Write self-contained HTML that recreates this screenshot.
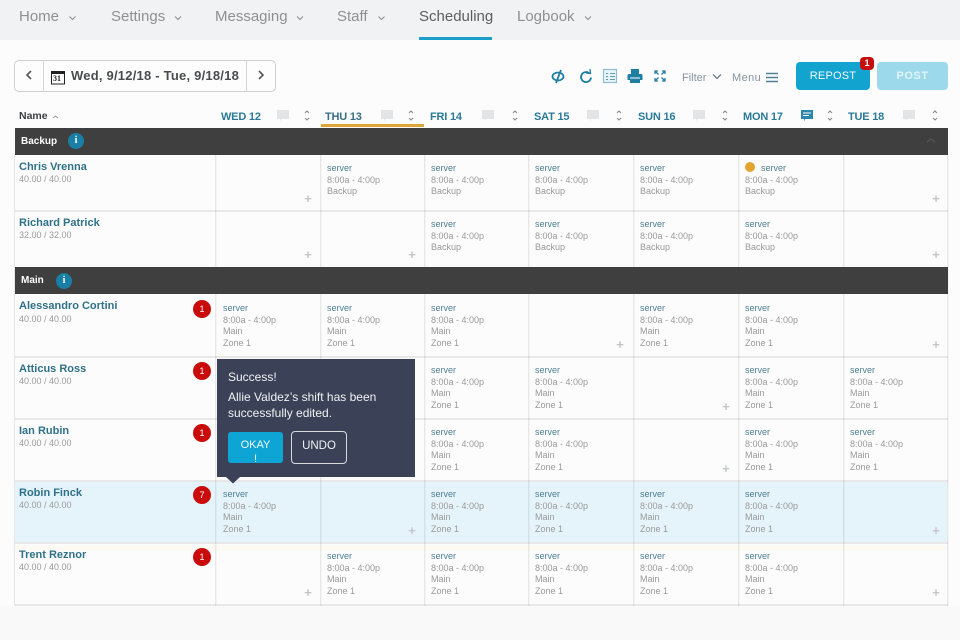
<!DOCTYPE html>
<html lang="en"><head><meta charset="utf-8"><title>Scheduling</title>
<style>
html,body{margin:0;padding:0}
body{width:960px;height:640px;position:relative;overflow:hidden;background:#fcfcfd;font-family:"Liberation Sans",sans-serif}
#p div,#p span,#p svg{position:absolute}
.t{white-space:nowrap;line-height:12px}
.nav{font-size:15px;color:#8f9091;top:8px;line-height:18px;white-space:nowrap}
.day{font-size:11px;font-weight:bold;color:#2a7a98;top:111px;line-height:12px;white-space:nowrap;letter-spacing:-.2px}
.h{background:#e8e8e9}
.v{background:linear-gradient(to right,rgba(0,0,0,.08) 50%,rgba(0,0,0,.03) 50%);width:2px}
.nm{font-size:11px;font-weight:bold;color:#2f7189;white-space:nowrap;line-height:12px;left:19px}
.hr{font-size:9px;color:#9b9b9b;white-space:nowrap;line-height:12px;left:19px}
.b{width:18px;height:18px;border-radius:50%;background:#c90b0b;color:#fff;font-size:9px;text-align:center;line-height:18px;left:193px}
.c{font-size:9px;color:#9a9a9a;white-space:nowrap;line-height:12px}
.c i{font-style:normal;position:absolute;left:0}
.c i.s{color:#4d7f8f}
.pl{font-size:13px;font-weight:bold;color:#c4c7c9;line-height:12px;width:12px;text-align:center}
.dk{left:15px;width:933px;height:27px;background:#3f3f3f}
.gt{color:#fff;font-size:10px;font-weight:bold;line-height:12px;left:21px}
.inf{width:16px;height:16px;border-radius:50%;background:#1a7fa5;color:#fff;font:bold 10px/16px "Liberation Serif",serif;text-align:center}
</style></head><body><div id="p">

<div style="left:0;top:0;width:960px;height:40px;background:#f1f2f3"></div>
<div class="nav" style="left:19px">Home</div>
<div class="nav" style="left:111px">Settings</div>
<div class="nav" style="left:215px">Messaging</div>
<div class="nav" style="left:337px">Staff</div>
<div class="nav" style="left:419px;color:#5b5e60">Scheduling</div>
<div class="nav" style="left:517px">Logbook</div>
<svg style="left:0;top:0" width="960" height="40" fill="none" stroke="#8f9091" stroke-width="1.100"><path d="M69.500 16.500l3 3 3-3M175 16.500l3 3 3-3M297 16.500l3 3 3-3M378.500 16.500l3 3 3-3M585 16.500l3 3 3-3"/></svg>
<div style="left:419px;top:37px;width:73px;height:3px;background:#1aa0c8"></div>

<div style="left:14px;top:60px;width:260px;height:30px;border:1px solid #cfd0d1;border-radius:5px;background:#fdfdfd"></div>
<div style="left:43px;top:61px;width:1px;height:30px;background:#d5d5d5"></div>
<div style="left:246px;top:61px;width:1px;height:30px;background:#d5d5d5"></div>
<svg style="left:0;top:55px" width="280" height="40" fill="none"><path d="M31 16l-4 4 4 4M259 16l4 4-4 4" stroke="#555" stroke-width="1.600"/><rect x="51.500" y="17" width="13" height="12" stroke="#222"/><rect x="51" y="16" width="14" height="3" fill="#222"/></svg>
<div class="t" style="left:53px;top:74px;font-size:8px;font-weight:bold;color:#222;font-family:'Liberation Serif',serif;line-height:10px">31</div>
<div class="t" style="left:71px;top:69px;font-size:13px;font-weight:bold;color:#4a4d50;letter-spacing:.22px;line-height:14px">Wed, 9/12/18 - Tue, 9/18/18</div>

<svg style="left:550px;top:66px" width="120" height="20" fill="none" stroke="#1e7fa3" stroke-width="1.800">
<ellipse cx="8" cy="10.500" rx="5.500" ry="4"/><path d="M11 4l-5 13"/>
<path d="M39.500 7.500a5 5 0 1 0 1.500 4"/><path d="M36 7l4.500.5L40 3" stroke-width="1.300"/>
<rect x="53.500" y="3.500" width="13" height="13" stroke="#8fbfd2" stroke-width="1.200" fill="#eaf4f8"/><path d="M56 7.500h2M60 7.500h5M56 10.500h2M60 10.500h5M56 13.500h2M60 13.500h5" stroke="#5d9fb8" stroke-width="1"/>
<path d="M81 3h8v6h-8z" fill="#1e7fa3" stroke="none"/><path d="M79 8h12a1.500 1.500 0 0 1 1.500 1.500V14h-15V9.500A1.500 1.500 0 0 1 79 8z" fill="#1e7fa3" stroke="none"/><path d="M80 14h10v3H80z" fill="#1e7fa3" stroke="none"/><path d="M80 12h10" stroke="#fff" stroke-width="1"/>
<path d="M105 5l3.500 3.500M115 5l-3.500 3.500M105 15l3.500-3.500M115 15l-3.500-3.500" stroke-width="1.300"/><path d="M105 8V5h3M112 5h3v3M105 12v3h3M112 15h3v-3" stroke-width="1.300"/>
</svg>
<div class="t" style="left:682px;top:72px;font-size:11px;color:#87949c">Filter</div>
<svg style="left:710px;top:70px" width="76" height="16" fill="none"><path d="M3 4.500l4 4 4-4" stroke="#6d7f89" stroke-width="1.300"/><path d="M56 3.500h12M56 7.500h12M56 11.500h12" stroke="#4f8094" stroke-width="1.500"/></svg>
<div class="t" style="left:732px;top:72px;font-size:11px;color:#87949c;letter-spacing:.4px">Menu</div>
<div style="left:796px;top:62px;width:74px;height:28px;background:#12a3cf;border-radius:4px;color:#f4fbfe;font-size:11px;line-height:28px;text-align:center;letter-spacing:.2px">REPOST</div>
<div style="left:860px;top:57px;width:14px;height:13px;background:#c70d0d;border-radius:4px;color:#fff;font-size:9px;font-weight:bold;line-height:13px;text-align:center">1</div>
<div style="left:877px;top:62px;width:71px;height:28px;background:#9bd9eb;border-radius:4px;color:#e3f5fa;font-size:11px;font-weight:bold;line-height:28px;text-align:center;letter-spacing:.5px">POST</div>

<div class="t" style="left:19px;top:110px;font-size:10.500px;font-weight:bold;color:#3a3d40">Name</div>
<svg style="left:50px;top:113px" width="10" height="8" fill="none"><path d="M3 5l2.500-2L8 5" stroke="#999"/></svg>
<div class="day" style="left:221px">WED 12</div>
<div class="day" style="left:325px;color:#3a6e82">THU 13</div>
<div class="day" style="left:430px">FRI 14</div>
<div class="day" style="left:534px">SAT 15</div>
<div class="day" style="left:638px">SUN 16</div>
<div class="day" style="left:743px">MON 17</div>
<div class="day" style="left:848px">TUE 18</div>
<div style="left:321px;top:124px;width:103px;height:3px;background:#e0a537"></div>
<svg style="left:0;top:105px" width="960" height="22" fill="#e3e4e5">
<path d="M277 5h12v9h-8l-1 2.500v-2.500h-3z"/>
<path d="M381 5h12v9h-8l-1 2.500v-2.500h-3zM482 5h12v9h-8l-1 2.500v-2.500h-3zM587 5h12v9h-8l-1 2.500v-2.500h-3zM693 5h12v9h-8l-1 2.500v-2.500h-3zM903 5h12v9h-8l-1 2.500v-2.500h-3z"/>
<path d="M801 5h12v9h-8l-1 2.500v-2.500h-3z" fill="#2a86aa"/><path d="M803 8h8M803 10.500h6" stroke="#fff"/>
<g fill="none" stroke="#7f8a90" stroke-width="1"><path d="M305 8l2-2 2 2M305 13l2 2 2-2M409 8l2-2 2 2M409 13l2 2 2-2M513 8l2-2 2 2M513 13l2 2 2-2M617 8l2-2 2 2M617 13l2 2 2-2M723 8l2-2 2 2M723 13l2 2 2-2M828 8l2-2 2 2M828 13l2 2 2-2M933 8l2-2 2 2M933 13l2 2 2-2"/></g>
</svg>

<div style="left:15px;top:481px;width:932px;height:62px;background:#e5f3fb"></div>
<div style="left:15px;top:545px;width:932px;height:6px;background:#fdf9f4"></div>
<div style="left:0;top:606px;width:960px;height:34px;background:#f9f9f9"></div>

<div class="h" style="left:15px;top:210px;width:933px;height:2px"></div>
<div class="h" style="left:15px;top:356px;width:933px;height:2px"></div>
<div class="h" style="left:15px;top:418px;width:933px;height:2px"></div>
<div class="h" style="left:15px;top:480px;width:933px;height:2px"></div>
<div class="h" style="left:15px;top:542px;width:933px;height:2px"></div>
<div class="h" style="left:15px;top:604px;width:933px;height:2px"></div>
<div class="v" style="left:14px;top:155px;height:451px;width:1px;background:#e6e6e7"></div>
<div class="v" style="left:947px;top:155px;height:451px"></div>
<div class="v" style="left:215px;top:155px;height:451px"></div>
<div class="v" style="left:320px;top:155px;height:451px"></div>
<div class="v" style="left:424px;top:155px;height:451px"></div>
<div class="v" style="left:528px;top:155px;height:451px"></div>
<div class="v" style="left:633px;top:155px;height:451px"></div>
<div class="v" style="left:738px;top:155px;height:451px"></div>
<div class="v" style="left:843px;top:155px;height:451px"></div>

<div class="dk" style="top:128px"></div>
<div class="dk" style="top:267px"></div>
<div class="gt" style="top:136px">Backup</div>
<div class="gt" style="top:275px">Main</div>
<div class="inf" style="left:68px;top:133px">i</div>
<div class="inf" style="left:56px;top:273px">i</div>
<svg style="left:925px;top:137px" width="12" height="8" fill="none"><path d="M2 5l4-3 4 3" stroke="#5c5c5c"/></svg>

<div class="nm" style="top:161px">Chris Vrenna</div><div class="hr" style="top:173px">40.00 / 40.00</div>
<div class="nm" style="top:217px">Richard Patrick</div><div class="hr" style="top:229px">32.00 / 32.00</div>
<div class="nm" style="top:300px">Alessandro Cortini</div><div class="hr" style="top:313px">40.00 / 40.00</div>
<div class="nm" style="top:363px">Atticus Ross</div><div class="hr" style="top:375px">40.00 / 40.00</div>
<div class="nm" style="top:425px">Ian Rubin</div><div class="hr" style="top:437px">40.00 / 40.00</div>
<div class="nm" style="top:487px">Robin Finck</div><div class="hr" style="top:499px">40.00 / 40.00</div>
<div class="nm" style="top:549px">Trent Reznor</div><div class="hr" style="top:561px">40.00 / 40.00</div>
<div class="b" style="top:300px">1</div>
<div class="b" style="top:362px">1</div>
<div class="b" style="top:424px">1</div>
<div class="b" style="top:486px">7</div>
<div class="b" style="top:548px">1</div>

<!-- Backup -->
<div class="c" style="left:327px;top:154px"><i class="s" style="top:8px">server</i><i style="top:20px">8:00a - 4:00p</i><i style="top:31px">Backup</i></div>
<div class="c" style="left:431px;top:154px"><i class="s" style="top:8px">server</i><i style="top:20px">8:00a - 4:00p</i><i style="top:31px">Backup</i></div>
<div class="c" style="left:535px;top:154px"><i class="s" style="top:8px">server</i><i style="top:20px">8:00a - 4:00p</i><i style="top:31px">Backup</i></div>
<div class="c" style="left:640px;top:154px"><i class="s" style="top:8px">server</i><i style="top:20px">8:00a - 4:00p</i><i style="top:31px">Backup</i></div>
<div class="c" style="left:745px;top:154px"><i class="s" style="top:8px;left:16px">server</i><i style="top:20px">8:00a - 4:00p</i><i style="top:31px">Backup</i></div>
<div style="left:745px;top:162px;width:10px;height:10px;border-radius:50%;background:#e5a42f"></div>
<div class="c" style="left:431px;top:210px"><i class="s" style="top:8px">server</i><i style="top:20px">8:00a - 4:00p</i><i style="top:31px">Backup</i></div>
<div class="c" style="left:535px;top:210px"><i class="s" style="top:8px">server</i><i style="top:20px">8:00a - 4:00p</i><i style="top:31px">Backup</i></div>
<div class="c" style="left:640px;top:210px"><i class="s" style="top:8px">server</i><i style="top:20px">8:00a - 4:00p</i><i style="top:31px">Backup</i></div>
<div class="c" style="left:745px;top:210px"><i class="s" style="top:8px">server</i><i style="top:20px">8:00a - 4:00p</i><i style="top:31px">Backup</i></div>

<!-- Alessandro -->
<div class="c" style="left:223px;top:294px"><i class="s" style="top:8px">server</i><i style="top:20px">8:00a - 4:00p</i><i style="top:31px">Main</i><i style="top:43px">Zone 1</i></div>
<div class="c" style="left:327px;top:294px"><i class="s" style="top:8px">server</i><i style="top:20px">8:00a - 4:00p</i><i style="top:31px">Main</i><i style="top:43px">Zone 1</i></div>
<div class="c" style="left:431px;top:294px"><i class="s" style="top:8px">server</i><i style="top:20px">8:00a - 4:00p</i><i style="top:31px">Main</i><i style="top:43px">Zone 1</i></div>
<div class="c" style="left:640px;top:294px"><i class="s" style="top:8px">server</i><i style="top:20px">8:00a - 4:00p</i><i style="top:31px">Main</i><i style="top:43px">Zone 1</i></div>
<div class="c" style="left:745px;top:294px"><i class="s" style="top:8px">server</i><i style="top:20px">8:00a - 4:00p</i><i style="top:31px">Main</i><i style="top:43px">Zone 1</i></div>
<!-- Atticus -->
<div class="c" style="left:431px;top:356px"><i class="s" style="top:8px">server</i><i style="top:20px">8:00a - 4:00p</i><i style="top:31px">Main</i><i style="top:43px">Zone 1</i></div>
<div class="c" style="left:535px;top:356px"><i class="s" style="top:8px">server</i><i style="top:20px">8:00a - 4:00p</i><i style="top:31px">Main</i><i style="top:43px">Zone 1</i></div>
<div class="c" style="left:745px;top:356px"><i class="s" style="top:8px">server</i><i style="top:20px">8:00a - 4:00p</i><i style="top:31px">Main</i><i style="top:43px">Zone 1</i></div>
<div class="c" style="left:850px;top:356px"><i class="s" style="top:8px">server</i><i style="top:20px">8:00a - 4:00p</i><i style="top:31px">Main</i><i style="top:43px">Zone 1</i></div>
<!-- Ian -->
<div class="c" style="left:431px;top:418px"><i class="s" style="top:8px">server</i><i style="top:20px">8:00a - 4:00p</i><i style="top:31px">Main</i><i style="top:43px">Zone 1</i></div>
<div class="c" style="left:535px;top:418px"><i class="s" style="top:8px">server</i><i style="top:20px">8:00a - 4:00p</i><i style="top:31px">Main</i><i style="top:43px">Zone 1</i></div>
<div class="c" style="left:745px;top:418px"><i class="s" style="top:8px">server</i><i style="top:20px">8:00a - 4:00p</i><i style="top:31px">Main</i><i style="top:43px">Zone 1</i></div>
<div class="c" style="left:850px;top:418px"><i class="s" style="top:8px">server</i><i style="top:20px">8:00a - 4:00p</i><i style="top:31px">Main</i><i style="top:43px">Zone 1</i></div>
<!-- Robin -->
<div class="c" style="left:223px;top:480px"><i class="s" style="top:8px">server</i><i style="top:20px">8:00a - 4:00p</i><i style="top:31px">Main</i><i style="top:43px">Zone 1</i></div>
<div class="c" style="left:431px;top:480px"><i class="s" style="top:8px">server</i><i style="top:20px">8:00a - 4:00p</i><i style="top:31px">Main</i><i style="top:43px">Zone 1</i></div>
<div class="c" style="left:535px;top:480px"><i class="s" style="top:8px">server</i><i style="top:20px">8:00a - 4:00p</i><i style="top:31px">Main</i><i style="top:43px">Zone 1</i></div>
<div class="c" style="left:640px;top:480px"><i class="s" style="top:8px">server</i><i style="top:20px">8:00a - 4:00p</i><i style="top:31px">Main</i><i style="top:43px">Zone 1</i></div>
<div class="c" style="left:745px;top:480px"><i class="s" style="top:8px">server</i><i style="top:20px">8:00a - 4:00p</i><i style="top:31px">Main</i><i style="top:43px">Zone 1</i></div>
<!-- Trent -->
<div class="c" style="left:327px;top:542px"><i class="s" style="top:8px">server</i><i style="top:20px">8:00a - 4:00p</i><i style="top:31px">Main</i><i style="top:43px">Zone 1</i></div>
<div class="c" style="left:431px;top:542px"><i class="s" style="top:8px">server</i><i style="top:20px">8:00a - 4:00p</i><i style="top:31px">Main</i><i style="top:43px">Zone 1</i></div>
<div class="c" style="left:535px;top:542px"><i class="s" style="top:8px">server</i><i style="top:20px">8:00a - 4:00p</i><i style="top:31px">Main</i><i style="top:43px">Zone 1</i></div>
<div class="c" style="left:640px;top:542px"><i class="s" style="top:8px">server</i><i style="top:20px">8:00a - 4:00p</i><i style="top:31px">Main</i><i style="top:43px">Zone 1</i></div>
<div class="c" style="left:745px;top:542px"><i class="s" style="top:8px">server</i><i style="top:20px">8:00a - 4:00p</i><i style="top:31px">Main</i><i style="top:43px">Zone 1</i></div>

<div class="pl" style="left:302px;top:193px">+</div>
<div class="pl" style="left:930px;top:193px">+</div>
<div class="pl" style="left:302px;top:249px">+</div>
<div class="pl" style="left:406px;top:249px">+</div>
<div class="pl" style="left:930px;top:249px">+</div>
<div class="pl" style="left:614px;top:339px">+</div>
<div class="pl" style="left:930px;top:339px">+</div>
<div class="pl" style="left:720px;top:401px">+</div>
<div class="pl" style="left:720px;top:463px">+</div>
<div class="pl" style="left:406px;top:525px">+</div>
<div class="pl" style="left:930px;top:525px">+</div>
<div class="pl" style="left:302px;top:587px">+</div>
<div class="pl" style="left:930px;top:587px">+</div>

<div style="left:217px;top:359px;width:198px;height:118px;background:#3b4257"></div>
<svg style="left:226px;top:477px" width="14" height="7"><path d="M0 0h14L7 6.500z" fill="#3b4257"/></svg>
<div class="t" style="left:228px;top:371px;font-size:12px;color:#f1f2f4">Success!</div>
<div class="t" style="left:228px;top:389px;font-size:12px;color:#f1f2f4;line-height:16px">Allie Valdez’s shift has been<br>successfully edited.</div>
<div style="left:228px;top:432px;width:55px;height:31px;background:#0ea5d4;border-radius:3px;color:#f4fbfe;font-size:11px;text-align:center;line-height:14px"><span style="left:0;top:6px;width:55px">OKAY</span><span style="left:0;top:20px;width:55px">!</span></div>
<div style="left:291px;top:431px;width:54px;height:31px;border:1px solid #d8dadf;border-radius:4px;color:#f1f2f4;font-size:11.500px;text-align:center;line-height:29px">UNDO</div>

</div></body></html>
